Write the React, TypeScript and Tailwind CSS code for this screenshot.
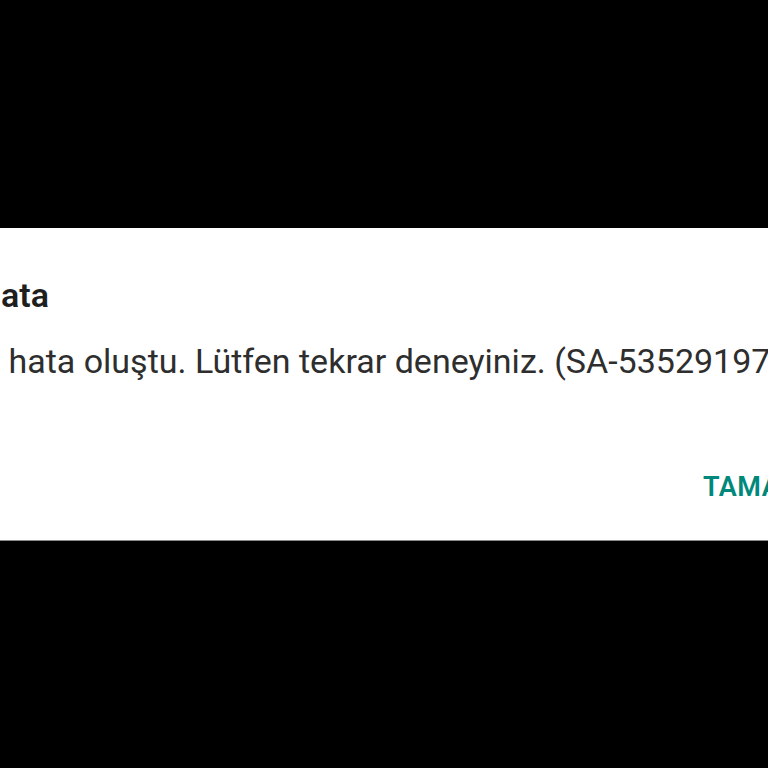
export default function App() {
  return (
    <div className="flex h-[768px] w-[768px] items-center overflow-hidden bg-black font-['Roboto','Liberation_Sans',sans-serif]">
      <div className="h-[313px] w-full overflow-hidden border-b border-[#8a8a8a] bg-white">
        <div className="-ml-[23px] whitespace-nowrap pt-[47px] text-[34px] font-semibold leading-[40px] text-[#1f1f1f]">
          Hata
        </div>
        <div className="-ml-[41px] mt-[26px] whitespace-nowrap text-[34px] leading-[40px] text-[#2e2e2e]">
          Bir hata oluştu. Lütfen tekrar deneyiniz. (SA-53529197)
        </div>
        <div className="mt-[90px] whitespace-nowrap pl-[703px] text-[27px] font-semibold leading-[32px] tracking-[0.5px] text-[#00897b]">
          TAMAM
        </div>
      </div>
    </div>
  );
}
